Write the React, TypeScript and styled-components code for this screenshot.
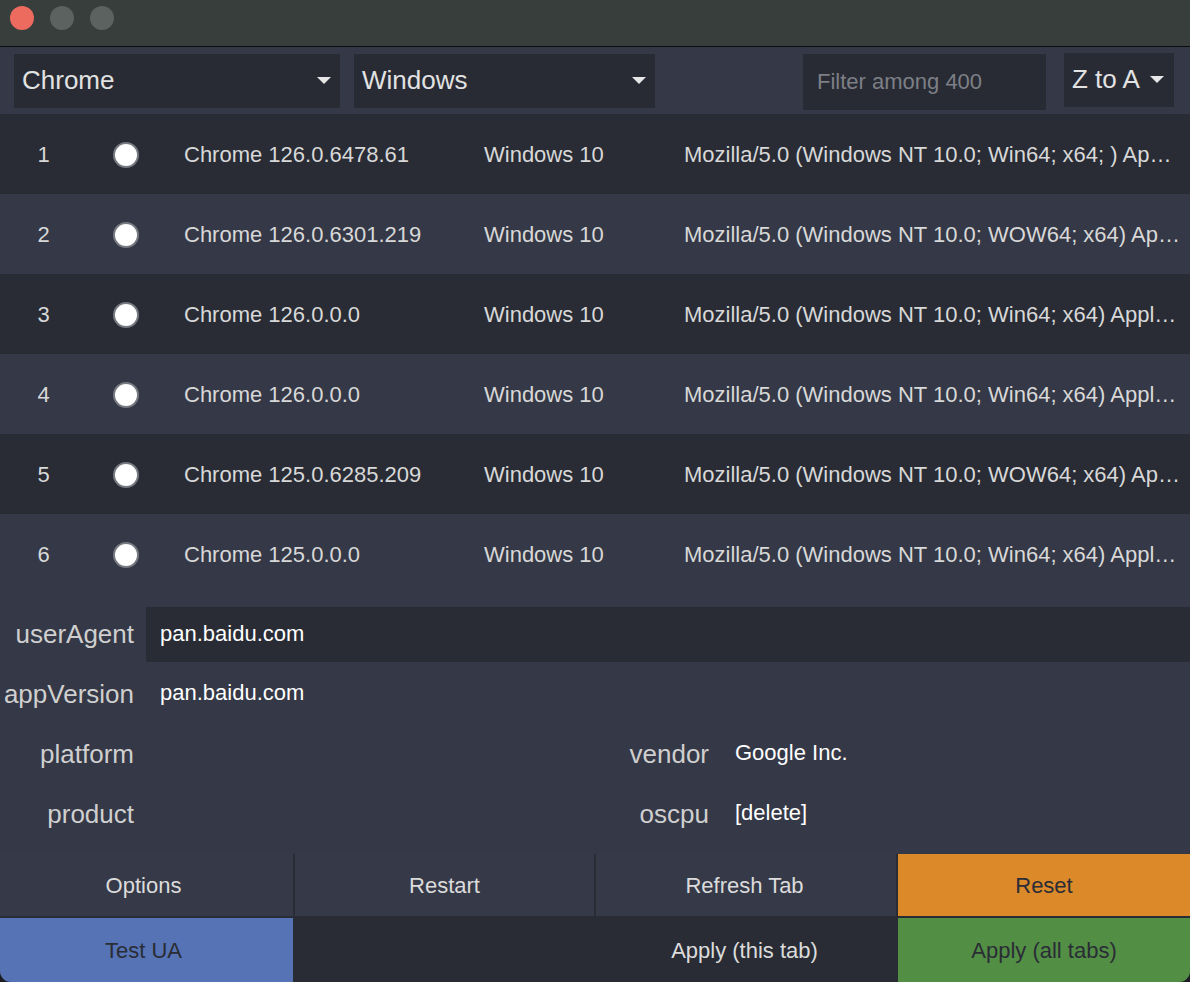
import React from "react";
import styled, { createGlobalStyle } from "styled-components";

const Global = createGlobalStyle`
  html, body { margin: 0; padding: 0; background: #1c1d22; }
  body { font-family: "Liberation Sans", Arial, Helvetica, sans-serif; }
  * { box-sizing: border-box; }
`;

const Window = styled.div`
  width: 1190px;
  height: 982px;
  display: flex;
  flex-direction: column;
  background: #353846;
  border-radius: 0 0 11px 11px;
  overflow: hidden;
`;

const TitleBar = styled.div`
  height: 47px;
  flex: none;
  background: #373e3c;
  border-bottom: 1px solid #0c0d0d;
  display: flex;
  align-items: flex-start;
  gap: 16px;
  padding: 6px 0 0 10px;
`;

const Light = styled.span<{ $c: string }>`
  width: 24px;
  height: 24px;
  border-radius: 50%;
  background: ${(p) => p.$c};
`;

const Toolbar = styled.div`
  height: 67px;
  flex: none;
  display: flex;
  align-items: center;
  padding: 0 16px 0 14px;
`;

const Select = styled.div<{ $w: number }>`
  width: ${(p) => p.$w}px;
  height: 54px;
  background: #282b34;
  display: flex;
  align-items: center;
  justify-content: space-between;
  padding: 0 9px 0 8px;
  color: #e2e2e2;
  font-size: 26px;
  margin-right: 14px;
`;

const Caret = styled.span`
  width: 0;
  height: 0;
  border-left: 7px solid transparent;
  border-right: 7px solid transparent;
  border-top: 7px solid #e6e6e6;
`;

const Spacer = styled.div`
  flex: 1;
`;

const Filter = styled.div`
  width: 243px;
  height: 56px;
  margin-top: 2px;
  background: #282b34;
  color: #7d7f86;
  font-size: 22px;
  display: flex;
  align-items: center;
  padding-left: 14px;
  margin-right: 18px;
`;

const Sort = styled.div`
  width: 110px;
  height: 54px;
  margin-top: -2px;
  background: #282b34;
  color: #e2e2e2;
  font-size: 26px;
  display: flex;
  align-items: center;
  gap: 10px;
  padding-left: 8px;
`;

const List = styled.div`
  flex: none;
  display: flex;
  flex-direction: column;
`;

const Row = styled.div<{ $dark: boolean }>`
  height: 80px;
  display: grid;
  grid-template-columns: 86px 80px 300px 200px minmax(0, 1fr);
  align-items: center;
  background: ${(p) => (p.$dark ? "#292c35" : "#353846")};
  color: #d8d8d8;
  font-size: 22px;
  padding-right: 8px;
  padding-top: 1px;
`;

const Num = styled.span`
  text-align: center;
  padding-left: 1px;
`;

const Radio = styled.span`
  justify-self: center;
  width: 26px;
  height: 26px;
  border-radius: 50%;
  background: #ffffff;
  border: 2px solid #777a80;
`;

const Cell = styled.span`
  padding-left: 18px;
  white-space: nowrap;
  overflow: hidden;
  text-overflow: ellipsis;
`;

const Fields = styled.div`
  flex: none;
  padding: 10px 0;
  display: grid;
  grid-template-columns: 134px 417px 134px 1fr;
  grid-auto-rows: 60px;
  column-gap: 12px;
  align-items: center;
`;

const Label = styled.span`
  text-align: right;
  color: #cfcfcf;
  font-size: 26px;
  white-space: nowrap;
`;

const Input = styled.div`
  grid-column: 2 / -1;
  height: 55px;
  background: #292c35;
  color: #ffffff;
  font-size: 22px;
  display: flex;
  align-items: center;
  padding-left: 14px;
`;

const Value = styled.span<{ $span?: boolean }>`
  grid-column: ${(p) => (p.$span ? "2 / -1" : "auto")};
  color: #ffffff;
  font-size: 22px;
  padding-left: 14px;
  padding-bottom: 2px;
`;

const Buttons = styled.div`
  flex: 1;
  display: grid;
  grid-template-columns: 293px 299px 300px 1fr;
  grid-template-rows: 62px 64px;
  column-gap: 2px;
  row-gap: 2px;
  background: #292c35;
`;

const Btn = styled.div<{ $bg: string; $fg?: string; $shift?: number }>`
  background: ${(p) => p.$bg};
  color: ${(p) => p.$fg ?? "#dcdcdc"};
  font-size: 22px;
  display: flex;
  align-items: center;
  justify-content: center;
  padding-top: 2px;
  padding-right: ${(p) => p.$shift ?? 0}px;
`;

const agents = [
  ["Chrome 126.0.6478.61", "Mozilla/5.0 (Windows NT 10.0; Win64; x64; ) AppleWebKit/537.36 (KHTML, like Gecko) Chrome/126.0.6478.61 Safari/537.36"],
  ["Chrome 126.0.6301.219", "Mozilla/5.0 (Windows NT 10.0; WOW64; x64) AppleWebKit/537.36 (KHTML, like Gecko) Chrome/126.0.6301.219 Safari/537.36"],
  ["Chrome 126.0.0.0", "Mozilla/5.0 (Windows NT 10.0; Win64; x64) AppleWebKit/537.36 (KHTML, like Gecko) Chrome/126.0.0.0 Safari/537.36"],
  ["Chrome 126.0.0.0", "Mozilla/5.0 (Windows NT 10.0; Win64; x64) AppleWebKit/537.36 (KHTML, like Gecko) Chrome/126.0.0.0 Safari/537.36"],
  ["Chrome 125.0.6285.209", "Mozilla/5.0 (Windows NT 10.0; WOW64; x64) AppleWebKit/537.36 (KHTML, like Gecko) Chrome/125.0.6285.209 Safari/537.36"],
  ["Chrome 125.0.0.0", "Mozilla/5.0 (Windows NT 10.0; Win64; x64) AppleWebKit/537.36 (KHTML, like Gecko) Chrome/125.0.0.0 Safari/537.36"],
];

export default function App() {
  return (
    <>
      <Global />
      <Window>
        <TitleBar>
          <Light $c="#ed6a5e" />
          <Light $c="#5b6260" />
          <Light $c="#5b6260" />
        </TitleBar>
        <Toolbar>
          <Select $w={326}>
            Chrome <Caret />
          </Select>
          <Select $w={301}>
            Windows <Caret />
          </Select>
          <Spacer />
          <Filter>Filter among 400</Filter>
          <Sort>
            Z to A <Caret />
          </Sort>
        </Toolbar>
        <List>
          {agents.map(([name, ua], i) => (
            <Row key={i} $dark={i % 2 === 0}>
              <Num>{i + 1}</Num>
              <Radio />
              <Cell>{name}</Cell>
              <Cell>Windows 10</Cell>
              <Cell>{ua}</Cell>
            </Row>
          ))}
        </List>
        <Fields>
          <Label>userAgent</Label>
          <Input>pan.baidu.com</Input>
          <Label>appVersion</Label>
          <Value $span>pan.baidu.com</Value>
          <Label>platform</Label>
          <Value />
          <Label>vendor</Label>
          <Value>Google Inc.</Value>
          <Label>product</Label>
          <Value />
          <Label>oscpu</Label>
          <Value>[delete]</Value>
        </Fields>
        <Buttons>
          <Btn $bg="#363a48" $shift={6}>Options</Btn>
          <Btn $bg="#363a48">Restart</Btn>
          <Btn $bg="#363a48" $shift={3}>Refresh Tab</Btn>
          <Btn $bg="#db8929" $fg="#2a2d36">Reset</Btn>
          <Btn $bg="#5573b5" $fg="#2a2d36" $shift={6}>Test UA</Btn>
          <Btn $bg="#292c35" />
          <Btn $bg="#292c35" $shift={3}>Apply (this tab)</Btn>
          <Btn $bg="#528f45" $fg="#2a2d36">Apply (all tabs)</Btn>
        </Buttons>
      </Window>
    </>
  );
}
